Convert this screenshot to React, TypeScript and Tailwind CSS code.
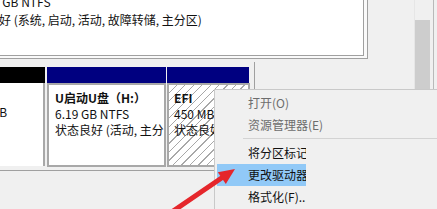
import React from 'react'

const font = "font-['Microsoft_YaHei','Noto_Sans_CJK_SC',sans-serif]"

function MenuItem({ label, disabled, active, clip }: { label: string; disabled?: boolean; active?: boolean; clip?: boolean }) {
  return (
    <div
      className={`h-[22px] pl-[31px] leading-[22px] whitespace-nowrap ${clip ? 'w-[89px] overflow-hidden' : ''} ${
        active ? 'bg-[#91c9f7]' : ''
      } ${disabled ? 'text-[#6d6d6d]' : 'text-[#111111]'}`}
    >
      {label}
    </div>
  )
}

export default function App() {
  return (
    <div className={`relative w-[437px] h-[209px] overflow-hidden bg-[#f0f0f0] text-[12px] text-[#111111] ${font}`}>
      <div className="flex">
        {/* Left: graphical disk view */}
        <div className="w-[414px]">
          {/* Disk 0 partition box (scrolled) */}
          <div className="w-[368px] h-[59px] bg-[#fafafa] border-r border-b border-[#a0a0a0]">
            <div className="w-[364px] h-[56px] bg-white border-r border-b border-[#a0a0a0] overflow-hidden">
              <div className="-ml-[37px] -mt-[7px] leading-[18px] whitespace-nowrap">
                <div>111.79 GB NTFS</div>
                <div>状态良好 (系统, 启动, 活动, 故障转储, 主分区)</div>
              </div>
            </div>
          </div>

          {/* Disk 1 row */}
          <div className="mt-[3px] w-[255px] h-[109px] pt-[5px] border-r border-b border-[#a0a0a0] flex">
            {/* Disk label */}
            <div className="w-[45px] flex flex-col">
              <div className="h-[16px] bg-black" />
              <div className="w-[45px] h-[83px] bg-white border-r-2 border-[#a8a8a8] overflow-hidden">
                <div className="-ml-[35px] pt-[5px] leading-[16px] whitespace-nowrap">
                  <div className="invisible">磁盘 1</div>
                  <div>7.45 GB</div>
                  <div className="invisible">联机</div>
                </div>
              </div>
            </div>

            {/* U盘 partition */}
            <div className="ml-[2px] w-[119px] flex flex-col">
              <div className="h-[16px] bg-[#000080]" />
              <div className="h-[84px] bg-white border-2 border-[#a8a8a8] overflow-hidden">
                <div className="pl-[6px] pt-[5px] leading-[16px] whitespace-nowrap">
                  <div className="font-bold">U启动U盘（H:）</div>
                  <div>6.19 GB NTFS</div>
                  <div>状态良好 (活动, 主分区)</div>
                </div>
              </div>
            </div>

            {/* EFI partition (selected, hatched) */}
            <div className="ml-[1px] w-[83px] flex flex-col">
              <div className="h-[16px] w-[82px] bg-[#000080]" />
              <div className="h-[84px] border-2 border-[#a8a8a8] overflow-hidden bg-[repeating-linear-gradient(135deg,#ffffff_0px,#ffffff_5px,#a8a8a8_5px,#a8a8a8_6px)]">
                <div className="pl-[5px] pt-[5px] leading-[16px] whitespace-nowrap">
                  <div className="font-bold">EFI</div>
                  <div>450 MB</div>
                  <div>状态良好 (EFI 系统分区)</div>
                </div>
              </div>
            </div>
          </div>
        </div>

        {/* Right: vertical scrollbar */}
        <div className="w-[23px] h-[209px] flex">
          <div className="w-[1px] h-full bg-[#e6e6e6]" />
          <div className="w-[15px] pt-[20px]">
            <div className="h-[69px] bg-[#cdcdcd]" />
          </div>
          <div className="w-[3px]" />
          <div className="w-[1px] h-full bg-[#b9b9b9]" />
        </div>
      </div>

      {/* Context menu */}
      <div className="absolute left-[214px] top-[89px] right-0 bottom-0 bg-[#f0f0f0] border-l border-t border-[#c9c9c9] pt-[2px] pl-[2px]">
        <MenuItem label="打开(O)" disabled />
        <MenuItem label="资源管理器(E)" disabled />
        <div className="h-[6px] pt-[2px] pl-[26px]">
          <div className="h-px bg-[#d3d3d3]" />
        </div>
        <MenuItem label="将分区标记为活动分区(M)" clip />
        <MenuItem label="更改驱动器号和路径(C)..." active clip />
        <MenuItem label="格式化(F)..." clip />
      </div>

      {/* Red annotation arrow */}
      <svg className="absolute left-0 top-0 pointer-events-none" width="437" height="209" viewBox="0 0 437 209">
        <line x1="163" y1="218" x2="223" y2="177" stroke="#e5262b" strokeWidth="5" strokeLinecap="round" />
        <polygon points="235,169 225.8,183.9 217.8,172.3" fill="#e5262b" />
      </svg>
    </div>
  )
}
